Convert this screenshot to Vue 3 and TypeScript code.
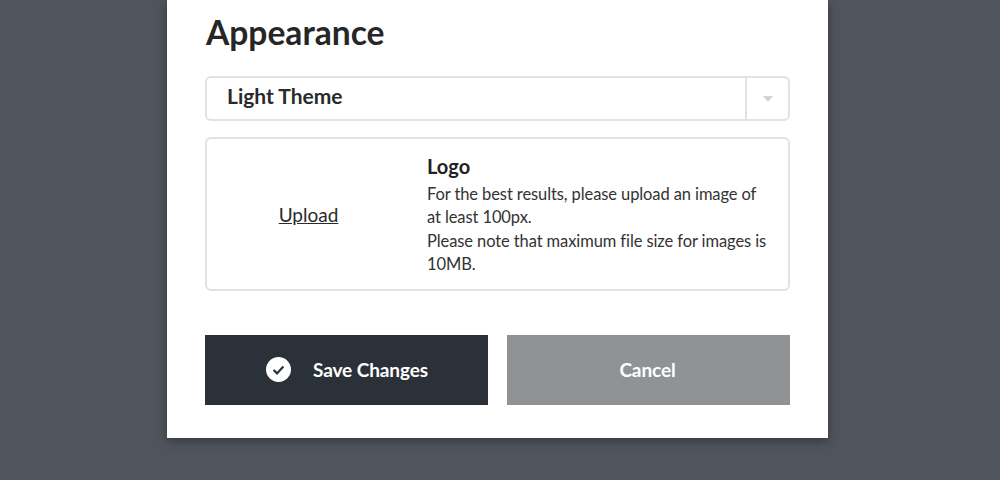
<script setup lang="ts">
const title: string = 'Appearance'
</script>

<template>
  <div class="page">
    <section class="card">
      <h1 class="title">{{ title }}</h1>
      <div class="select">
        <span class="value">Light Theme</span>
        <span class="arrow"><i class="caret"></i></span>
      </div>
      <div class="upload">
        <div class="upload-left"><a class="link">Upload</a></div>
        <div class="upload-info">
          <div class="logo">Logo</div>
          <p>For the best results, please upload an image of at least 100px.<br />Please note that maximum file size for images is 10MB.</p>
        </div>
      </div>
      <div class="actions">
        <button class="btn save">
          <svg class="check" width="25" height="25" viewBox="0 0 25 25">
            <circle cx="12.5" cy="12.5" r="12.5" fill="#fff" />
            <path d="M7.6 13l3.4 3.4 6.4-7" fill="none" stroke="#2b3138" stroke-width="2.2" />
          </svg>
          <span>Save Changes</span>
        </button>
        <button class="btn cancel">Cancel</button>
      </div>
    </section>
  </div>
</template>

<style>
html, body { margin: 0; background: #50545d; }
</style>

<style scoped>
.page {
  width: 1000px;
  height: 480px;
  overflow: hidden;
  background: #50545d;
  font-family: Lato, "Liberation Sans", sans-serif;
  color: #222;
}
.card {
  box-sizing: border-box;
  width: 661px;
  height: 438px;
  margin-left: 167px;
  padding: 12px 38px 0;
  background: #fff;
  box-shadow: 0 3px 10px rgba(0, 0, 0, 0.35);
}
.title {
  margin: 0;
  height: 64px;
  padding-left: 1px;
  font-size: 33.6px;
  line-height: 40px;
  font-weight: 700;
  color: #262626;
}
.select {
  display: flex;
  box-sizing: border-box;
  height: 45px;
  border: 2px solid #e2e2e2;
  border-radius: 6px;
}
.value {
  flex: 1;
  padding-left: 20px;
  font-size: 21px;
  line-height: 36px;
  font-weight: 700;
  color: #2a2a2a;
}
.arrow {
  display: flex;
  align-items: center;
  justify-content: center;
  width: 41px;
  border-left: 2px solid #e2e2e2;
}
.caret {
  width: 0;
  height: 0;
  border-left: 5.5px solid transparent;
  border-right: 5.5px solid transparent;
  border-top: 6px solid #d4d4d4;
}
.upload {
  display: flex;
  box-sizing: border-box;
  height: 154px;
  margin-top: 16px;
  border: 2px solid #e2e2e2;
  border-radius: 6px;
}
.upload-left {
  display: flex;
  align-items: center;
  justify-content: center;
  width: 203px;
  flex: none;
}
.link {
  font-size: 19px;
  color: #2a2a2a;
  text-decoration: underline;
}
.upload-info {
  flex: 1;
  padding: 14px 20px 0 17px;
}
.logo {
  font-size: 20px;
  line-height: 26px;
  font-weight: 700;
  color: #222;
}
.upload-info p {
  margin: 4px 0 0;
  font-size: 16.5px;
  letter-spacing: -0.1px;
  line-height: 23.33px;
  color: #333;
}
.actions {
  display: flex;
  gap: 19px;
  margin-top: 44px;
}
.btn {
  display: flex;
  align-items: center;
  justify-content: center;
  width: 283px;
  height: 70px;
  padding: 0 0 1px;
  border: 0;
  color: #fff;
  font-family: inherit;
  font-size: 19px;
  font-weight: 700;
  letter-spacing: -0.1px;
}
.save { background: #2b3138; gap: 22px; padding-left: 1px; }
.cancel { background: #909396; padding-right: 2px; }
.check { flex: none; }
</style>
